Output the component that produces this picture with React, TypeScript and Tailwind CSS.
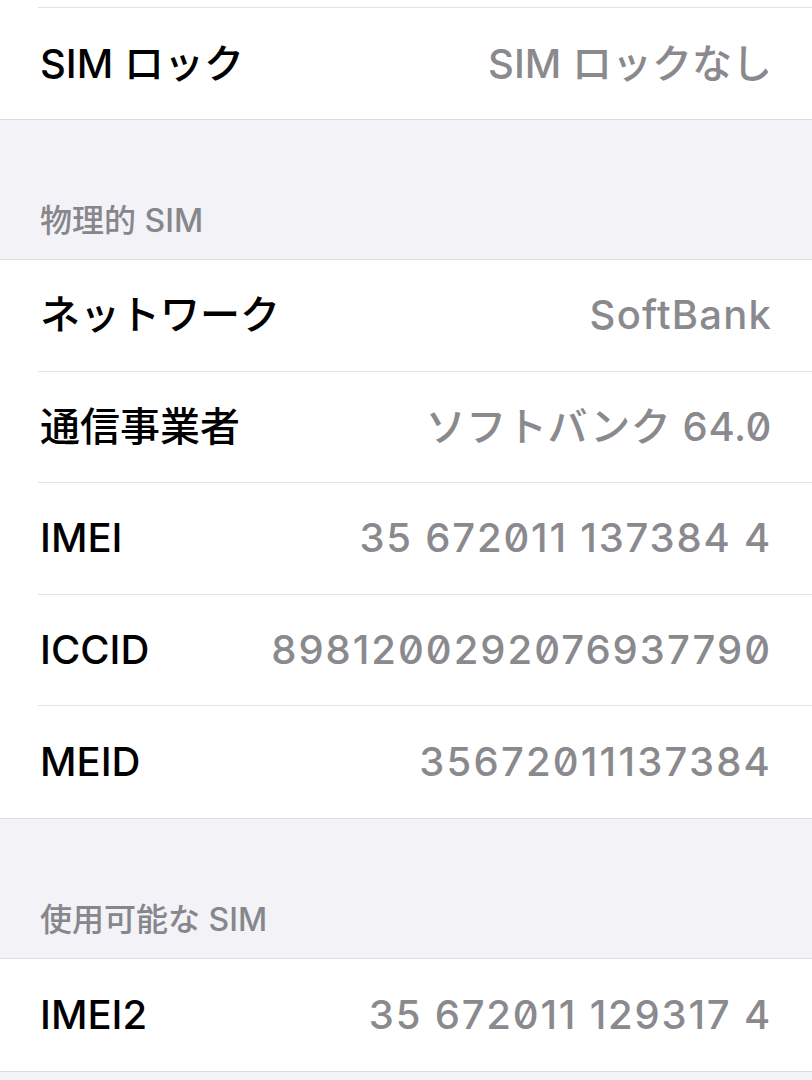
const FONT = "font-['Inter','Noto_Sans_CJK_JP',sans-serif]";

type Item = { label: string; value: string; track: string };

const physical: Item[] = [
  { label: 'ネットワーク', value: 'SoftBank', track: 'tracking-[1.2px]' },
  { label: '通信事業者', value: 'ソフトバンク 64.0', track: 'tracking-[0.6px]' },
  { label: 'IMEI', value: '35 672011 137384 4', track: 'tracking-[1.8px]' },
  { label: 'ICCID', value: '8981200292076937790', track: 'tracking-[2px]' },
  { label: 'MEID', value: '35672011137384', track: 'tracking-[2.2px]' },
];

function Row({ label, value, track, last }: Item & { last?: boolean }) {
  return (
    <div className="h-[111.6px] pl-[38px]">
      <div
        className={`flex h-full items-center justify-between pl-[2px] pr-[40px] ${
          last ? '' : 'border-b border-[#e3e3e6]'
        }`}
      >
        <span className="text-[40px] font-medium leading-none text-black">{label}</span>
        <span className={`text-[40px] font-medium leading-none text-[#8a8a8e] slashed-zero ${track}`}>
          {value}
        </span>
      </div>
    </div>
  );
}

function Header({ title }: { title: string }) {
  return (
    <div className="flex h-[140px] items-end border-b border-[#dcdce0] bg-[#f2f2f7] pb-[20px] pl-[40px]">
      <span className="text-[32px] font-medium leading-[36px] text-[#86868b]">{title}</span>
    </div>
  );
}

export default function App() {
  return (
    <div className={`${FONT} h-[1080px] w-[812px] overflow-hidden bg-[#f2f2f7]`}>
      <div className="border-b border-[#dcdce0] bg-white">
        <div className="h-[8px] pl-[38px]">
          <div className="h-full border-b border-[#e3e3e6]" />
        </div>
        <div className="flex h-[111px] items-center justify-between pl-[40px] pr-[40px]">
          <span className="text-[40px] font-medium leading-none text-black">SIM ロック</span>
          <span className="text-[40px] font-medium leading-none text-[#8a8a8e]">SIM ロックなし</span>
        </div>
      </div>

      <Header title="物理的 SIM" />

      <div className="border-b border-[#dcdce0] bg-white">
        {physical.map((item, i) => (
          <Row key={item.label} {...item} last={i === physical.length - 1} />
        ))}
      </div>

      <Header title="使用可能な SIM" />

      <div className="border-b border-[#dcdce0] bg-white">
        <Row label="IMEI2" value="35 672011 129317 4" track="tracking-[1.8px]" last />
      </div>
    </div>
  );
}
